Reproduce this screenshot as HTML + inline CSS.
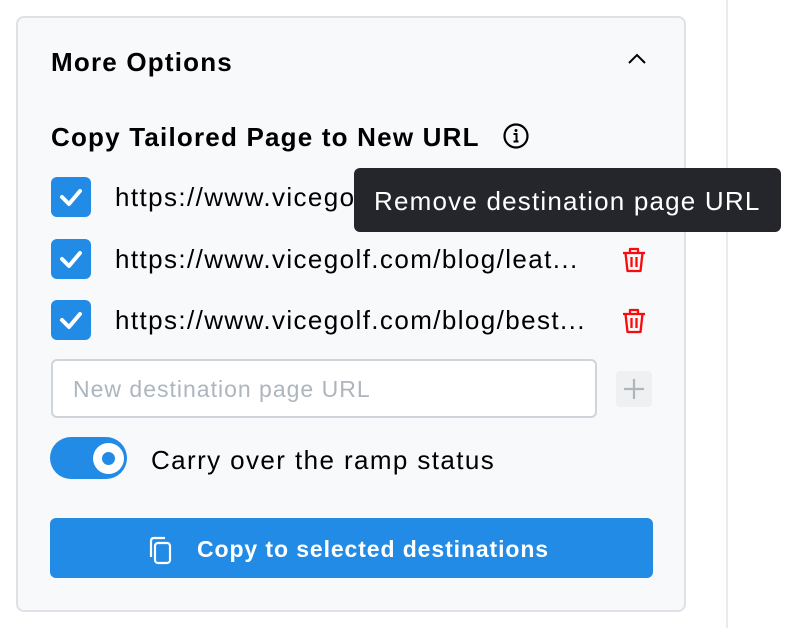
<!DOCTYPE html>
<html><head><style>
*{box-sizing:border-box;margin:0;padding:0}
body{width:798px;height:628px;background:#fff;font-family:"Liberation Sans",sans-serif;position:relative;overflow:hidden;color:#000}
.vl{position:absolute;left:726px;top:0;width:2px;height:628px;background:#e9ecef}
.panel{position:absolute;left:16px;top:16px;width:670px;height:596px;background:#f8f9fa;border:2px solid #dee2e6;border-radius:8px}
.abs{position:absolute}
.t{font-size:26px;letter-spacing:1.4px;white-space:nowrap}
.b{font-weight:bold}
.cb{position:absolute;left:51px;width:40px;height:40px;background:#228be6;border-radius:6px}
.trash{position:absolute;left:621px}
</style></head><body>
<div class="vl"></div>
<div class="panel"></div>
<div class="abs t b" style="left:51px;top:47px;letter-spacing:1.2px">More Options</div>
<svg class="abs" style="left:626px;top:52px" width="22" height="14"><path d="M3 11 L11 3 L19 11" fill="none" stroke="#000" stroke-width="2"/></svg>
<div class="abs t b" style="left:51px;top:122px;letter-spacing:1.2px">Copy Tailored Page to New URL</div>
<svg class="abs" style="left:502px;top:122px" width="28" height="28" viewBox="0 0 28 28"><circle cx="14" cy="14" r="11.5" fill="none" stroke="#000" stroke-width="2.2"/><circle cx="14" cy="8.5" r="1.5"/><path d="M11.5 12 H14.5 V19 M11.5 19.5 H16.5" fill="none" stroke="#000" stroke-width="2"/></svg>

<div class="cb" style="top:177px"></div>
<div class="cb" style="top:239px"></div>
<div class="cb" style="top:300px"></div>
<svg class="abs" style="left:51px;top:177px" width="40" height="163"><g fill="none" stroke="#fff" stroke-width="4" stroke-linecap="round" stroke-linejoin="round"><path d="M11 20 L18 27 L29 14"/><path d="M11 82 L18 89 L29 76"/><path d="M11 143 L18 150 L29 137"/></g></svg>
<div class="abs t" style="left:115px;top:182px">https://www.vicegolf.com</div>
<div class="abs t" style="left:115px;top:244px">https://www.vicegolf.com/blog/leat...</div>
<div class="abs t" style="left:115px;top:305px">https://www.vicegolf.com/blog/best...</div>
<svg class="trash" style="top:246px" width="26" height="28" viewBox="0 0 26 28"><g fill="none" stroke="#fa0a0a" stroke-width="2.3" stroke-linejoin="round"><path d="M2 7 H24"/><path d="M9 7 V3 H17 V7"/><path d="M4.5 7 L6.5 25 H19.5 L21.5 7"/><path d="M10.5 11 V21 M15.5 11 V21"/></g></svg>
<svg class="trash" style="top:307px" width="26" height="28" viewBox="0 0 26 28"><g fill="none" stroke="#fa0a0a" stroke-width="2.3" stroke-linejoin="round"><path d="M2 7 H24"/><path d="M9 7 V3 H17 V7"/><path d="M4.5 7 L6.5 25 H19.5 L21.5 7"/><path d="M10.5 11 V21 M15.5 11 V21"/></g></svg>

<div class="abs" style="left:354px;top:168px;width:427px;height:64px;background:#25262b;border-radius:6px"></div>
<div class="abs t" style="left:374px;top:186px;color:#fff;letter-spacing:1.2px">Remove destination page URL</div>

<div class="abs" style="left:51px;top:359px;width:546px;height:59px;background:#fff;border:2px solid #ced4da;border-radius:6px"></div>
<div class="abs" style="left:73px;top:376px;font-size:23px;letter-spacing:1px;color:#adb5bd;white-space:nowrap">New destination page URL</div>
<div class="abs" style="left:616px;top:371px;width:36px;height:36px;background:#eef0f2;border-radius:4px"></div>
<svg class="abs" style="left:616px;top:371px" width="36" height="36"><path d="M18 8 V28 M8 18 H28" stroke="#adb5bd" stroke-width="2.2"/></svg>

<div class="abs" style="left:50px;top:437px;width:77px;height:42px;background:#228be6;border-radius:21px"></div>
<div class="abs" style="left:93px;top:443px;width:31px;height:31px;background:#fff;border-radius:50%"></div>
<div class="abs" style="left:102px;top:452px;width:13px;height:13px;background:#228be6;border-radius:50%"></div>
<div class="abs t" style="left:151px;top:445px">Carry over the ramp status</div>

<div class="abs" style="left:50px;top:518px;width:603px;height:60px;background:#228be6;border-radius:6px"></div>
<svg class="abs" style="left:146px;top:535px" width="30" height="32" viewBox="0 0 30 32"><g fill="none" stroke="#fff" stroke-width="2.2" stroke-linejoin="round"><rect x="9" y="8" width="15" height="20" rx="3"/><path d="M5 22 V6 Q5 3 8 3 H19"/></g></svg>
<div class="abs b" style="left:197px;top:536px;font-size:23px;letter-spacing:0.9px;color:#fff;white-space:nowrap">Copy to selected destinations</div>
</body></html>
